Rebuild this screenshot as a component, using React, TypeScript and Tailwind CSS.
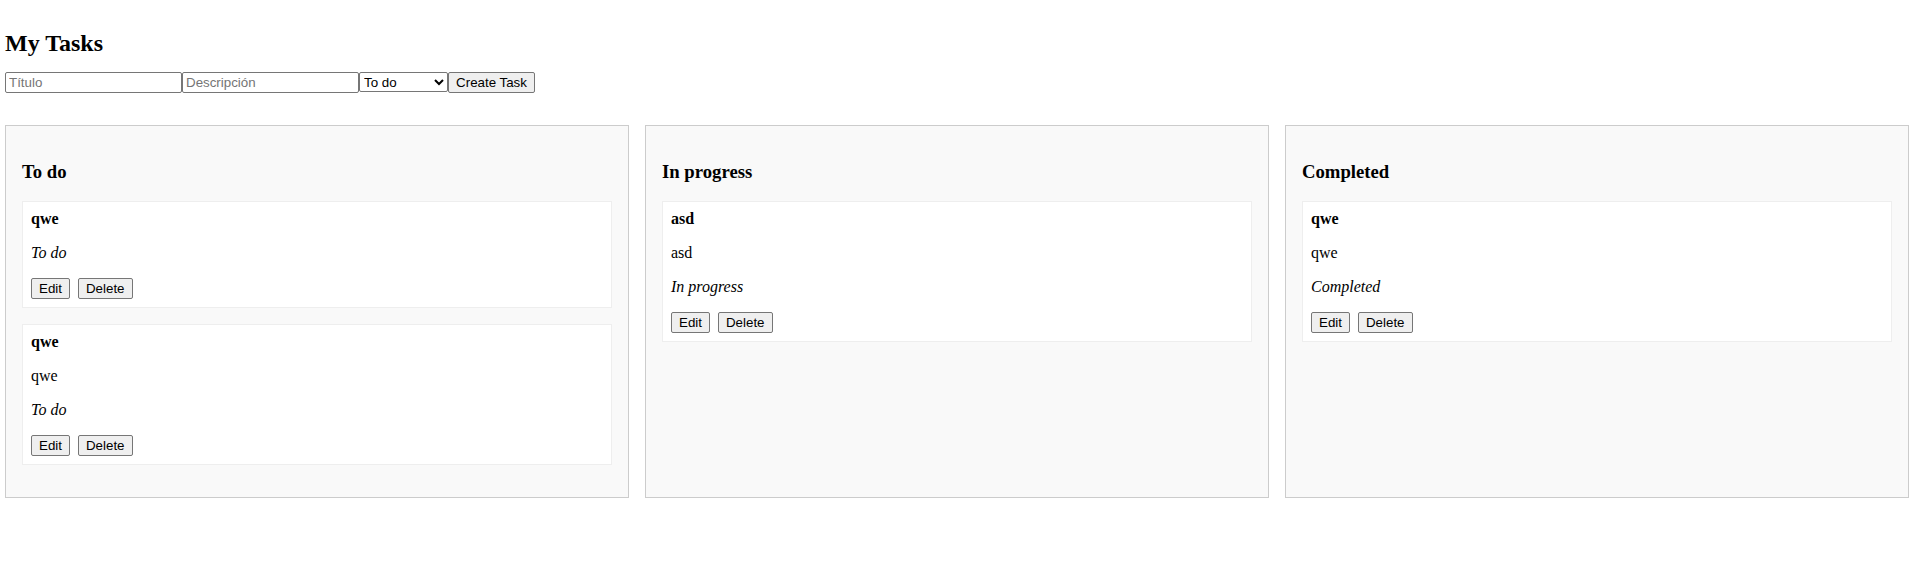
import { useState } from "react";

interface Task {
  id: number;
  title: string;
  description: string;
  status: string;
}

const tasks: Task[] = [
  { id: 1, title: "qwe", description: "", status: "To do" },
  { id: 2, title: "qwe", description: "qwe", status: "To do" },
  { id: 3, title: "asd", description: "asd", status: "In progress" },
  { id: 4, title: "qwe", description: "qwe", status: "Completed" },
];

const columns = ["To do", "In progress", "Completed"];

const btn =
  "h-[21px] px-[7px] bg-[#efefef] border border-[#767676] rounded-[2px] text-[13.33px] leading-none text-black font-['Liberation_Sans',Arial,sans-serif]";

const TaskCard = ({ task }: { task: Task }) => {
  return (
    <div className="bg-white border border-[#eeeeee] p-2 mb-4">
      <p className="font-bold text-base leading-[normal]">{task.title}</p>
      {task.description && <p className="mt-4 text-base leading-[normal]">{task.description}</p>}
      <p className="mt-4 italic text-base leading-[normal]">{task.status}</p>
      <div className="flex gap-[8px] mt-4">
        <button className={btn}>Edit</button>
        <button className={btn}>Delete</button>
      </div>
    </div>
  );
};

const App = () => {
  const [status, setStatus] = useState("To do");

  return (
    <div className="min-h-[583px] bg-white text-black pl-[5px] pr-[4px] pt-[10px] font-['Liberation_Serif','Times_New_Roman',serif]">
      <h2 className="text-[24px] font-bold leading-[normal] mt-[19.92px] mb-[14.92px]">My Tasks</h2>
      <div className="flex items-center h-[21px] font-['Liberation_Sans',Arial,sans-serif] text-[13.33px]">
        <input
          placeholder="Título"
          className="w-[177px] h-[21px] border border-[#767676] rounded-[2px] px-[3px] placeholder:text-[#757575] outline-none"
        />
        <input
          placeholder="Descripción"
          className="w-[177px] h-[21px] border border-[#767676] rounded-[2px] px-[3px] placeholder:text-[#757575] outline-none"
        />
        <select
          value={status}
          onChange={(e) => setStatus(e.target.value)}
          className="w-[89px] h-[20px] border border-[#767676] rounded-[2px] bg-white text-black"
        >
          <option>To do</option>
          <option>In progress</option>
          <option>Completed</option>
        </select>
        <button className="w-[87px] h-[21px] bg-[#efefef] border border-[#767676] rounded-[2px] text-black">
          Create Task
        </button>
      </div>

      <div className="grid grid-cols-3 gap-4 mt-[32px]">
        {columns.map((col) => (
          <div key={col} className="bg-[#f9f9f9] border border-[#cccccc] p-4">
            <h3 className="text-[18.72px] font-bold leading-[normal] my-[18.72px]">{col}</h3>
            {tasks
              .filter((t) => t.status === col)
              .map((t) => (
                <TaskCard key={t.id} task={t} />
              ))}
          </div>
        ))}
      </div>
    </div>
  );
};

export default App;
